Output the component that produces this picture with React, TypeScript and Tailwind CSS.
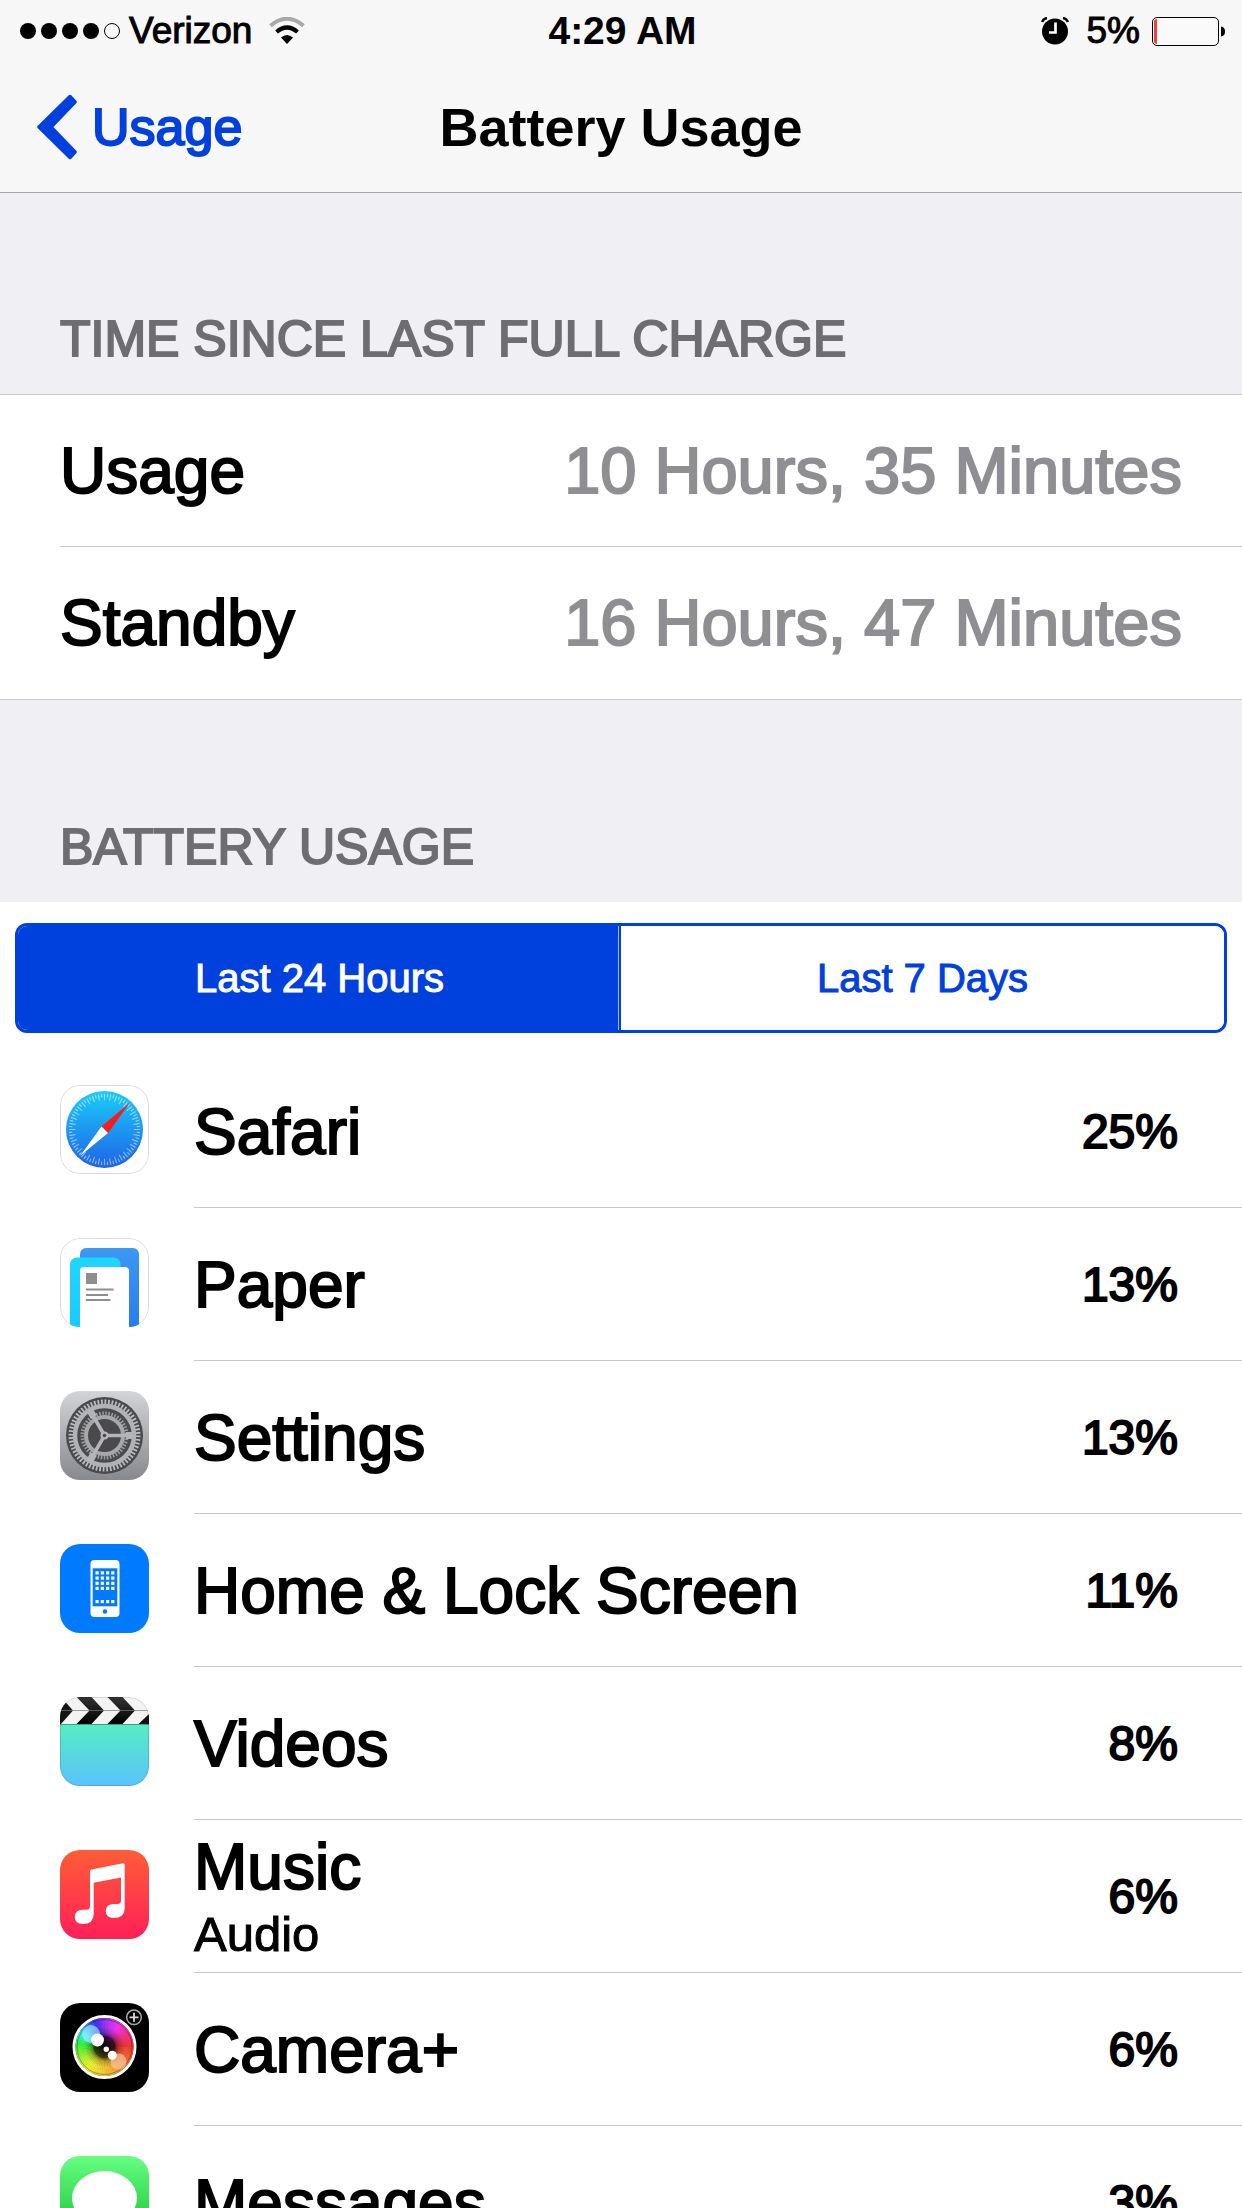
import { useState, type ReactNode } from 'react';

interface AppUsage {
  name: string;
  detail?: string;
  percent: number;
  icon: ReactNode;
}

function IconFrame({ id, children }: { id: string; children: ReactNode }) {
  return (
    <svg width="89" height="89" viewBox="0 0 89 89" aria-hidden="true">
      <clipPath id={`${id}-clip`}>
        <rect width="89" height="89" rx="20" />
      </clipPath>
      <g clipPath={`url(#${id}-clip)`}>{children}</g>
    </svg>
  );
}

function Gradient({ id, from, to }: { id: string; from: string; to: string }) {
  return (
    <linearGradient id={id} x1="0" y1="0" x2="0" y2="1">
      <stop offset="0" stopColor={from} />
      <stop offset="1" stopColor={to} />
    </linearGradient>
  );
}

function SafariIcon() {
  return (
    <IconFrame id="safari">
      <Gradient id="safari-bg" from="#1bcdf8" to="#1f62e8" />
      <rect width="89" height="89" fill="#fff" />
      <rect x="0.5" y="0.5" width="88" height="88" rx="19.5" fill="none" stroke="#d9d9dc" />
      <circle cx="44.5" cy="44.5" r="38.5" fill="url(#safari-bg)" />
      <circle cx="44.5" cy="44.5" r="32.5" fill="none" stroke="#fff" strokeOpacity="0.5" strokeWidth="6.5" pathLength="360" strokeDasharray="2 8" strokeDashoffset="1" />
      <circle cx="44.5" cy="44.5" r="34" fill="none" stroke="#fff" strokeOpacity="0.5" strokeWidth="3.5" pathLength="360" strokeDasharray="2 8" strokeDashoffset="6" />
      <path d="M70 17.5L41.5 41.5L48 48Z" fill="#fb1a17" />
      <path d="M20 71L41.5 41.5L48 48Z" fill="#fff" />
    </IconFrame>
  );
}

function PaperIcon() {
  return (
    <IconFrame id="paper">
      <Gradient id="paper-back" from="#3c98f1" to="#2579ec" />
      <Gradient id="paper-mid" from="#1fd6ff" to="#16c6ff" />
      <rect width="89" height="89" fill="#fff" />
      <rect x="0.5" y="0.5" width="88" height="88" rx="19.5" fill="none" stroke="#d9d9dc" />
      <rect x="20" y="10" width="59" height="90" rx="6" fill="url(#paper-back)" />
      <rect x="10" y="19.5" width="50.5" height="90" rx="7" fill="url(#paper-mid)" />
      <rect x="20" y="29" width="49" height="80" rx="4" fill="#fff" />
      <rect x="26" y="35" width="11" height="11" fill="#8e8e8e" />
      <path d="M26 51.5H53.5M26 57H48M26 62H50.5" stroke="#8e8e8e" strokeWidth="2" />
    </IconFrame>
  );
}

function SettingsIcon() {
  return (
    <IconFrame id="settings">
      <Gradient id="settings-bg" from="#d3d4d8" to="#88898e" />
      <rect width="89" height="89" fill="url(#settings-bg)" />
      <circle cx="44.5" cy="44.5" r="38.5" fill="#4a4a4c" />
      <circle cx="44.5" cy="44.5" r="33.5" fill="none" stroke="#bdbec2" strokeWidth="5" pathLength="360" strokeDasharray="3 3" />
      <circle cx="44.5" cy="44.5" r="29.5" fill="none" stroke="#b1b2b6" strokeWidth="4.5" />
      <circle cx="44.5" cy="44.5" r="22" fill="none" stroke="#9c9da0" strokeWidth="4" pathLength="360" strokeDasharray="4 4" />
      <circle cx="44.5" cy="44.5" r="18.5" fill="none" stroke="#a6a7ab" strokeWidth="4" />
      <path d="M44.5 44.5H74M44.5 44.5L29.75 19M44.5 44.5L29.75 70" stroke="#b4b5b9" strokeWidth="3.5" />
      <path d="M66 44.5H74M33.75 26L29.75 19M33.75 63L29.75 70" stroke="#b4b5b9" strokeWidth="7" />
      <circle cx="44.5" cy="44.5" r="4" fill="#b4b5b9" />
      <circle cx="44.5" cy="44.5" r="1.8" fill="#4a4a4c" />
    </IconFrame>
  );
}

function HomeIcon() {
  const cols = [35.5, 40.7, 46, 51.2];
  const rows = [27.3, 32.5, 37.7, 42.8, 56];
  return (
    <IconFrame id="home">
      <rect width="89" height="89" fill="#007aff" />
      <rect x="30.5" y="16" width="29" height="57" rx="4" fill="#fff" />
      <rect x="32.7" y="24.3" width="24.6" height="38" fill="#007aff" />
      {rows.map(y => cols.map(x => (
        <rect key={`${x}-${y}`} x={x} y={y} width="3.2" height="3.2" fill="#fff" />
      )))}
      <circle cx="45" cy="67.5" r="2.2" fill="#007aff" />
    </IconFrame>
  );
}

function VideosIcon() {
  return (
    <IconFrame id="videos">
      <Gradient id="videos-bg" from="#55eec2" to="#5ac2fd" />
      <Gradient id="videos-stripe" from="#333" to="#000" />
      <rect width="89" height="28" fill="#f3f3f3" />
      <rect y="27" width="89" height="62" fill="url(#videos-bg)" />
      <path d="M0 0H1L13 13.5L1 27H0Z" fill="#151515" />
      <path d="M16.5 0H31.5L44 13.5L31.5 27H16.5L29.5 13.5Z" fill="url(#videos-stripe)" />
      <path d="M47.5 0H62.5L75 13.5L62.5 27H47.5L60.5 13.5Z" fill="url(#videos-stripe)" />
      <path d="M78.5 27L89 17V27Z" fill="#111" />
      <path d="M0 13.5H89" stroke="#777" strokeOpacity="0.7" />
      <path d="M0 27.5H89" stroke="#3f9f86" />
      <rect x="0.5" y="0.5" width="88" height="88" rx="19.5" fill="none" stroke="#000" strokeOpacity="0.12" />
    </IconFrame>
  );
}

function MusicIcon() {
  return (
    <IconFrame id="music">
      <Gradient id="music-bg" from="#ff5d37" to="#ff1f58" />
      <rect width="89" height="89" fill="url(#music-bg)" />
      <path
        d="M31.5 19.5L63 13.2Q64.7 13 64.7 14.7V58Q64.7 68 53.5 68Q45.7 67.5 45.7 61Q46 54 54 54H57.5Q61 54 61 50.5V27.5L33.7 32.8V64Q33.5 74 23 74Q14.7 73.5 14.7 67Q15 59.7 23 59.7H26.5Q30 59.7 30 56V21.5Q30 19.8 31.5 19.5Z"
        fill="#fff"
      />
    </IconFrame>
  );
}

// hue at each 30 degree step round the lens, clockwise from the top
const LENS_HUES = [275, 300, 335, 365, 378, 395, 408, 418, 440, 475, 545, 590, 635];

function CameraIcon() {
  const wedges = Array.from({ length: 72 }, (_, i) => {
    const step = Math.floor(i / 6);
    const hue = LENS_HUES[step] + ((LENS_HUES[step + 1] - LENS_HUES[step]) * (i % 6)) / 6;
    const a = (i * 5 * Math.PI) / 180;
    const b = ((i * 5 + 6) * Math.PI) / 180;
    return {
      hue: hue % 360,
      d: `M44.5 44L${44.5 + 29 * Math.sin(a)} ${44 - 29 * Math.cos(a)}L${44.5 + 29 * Math.sin(b)} ${44 - 29 * Math.cos(b)}Z`,
    };
  });
  return (
    <IconFrame id="camera">
      <radialGradient id="camera-iris">
        <stop offset="0" stopColor="#000" stopOpacity="0.9" />
        <stop offset="0.35" stopColor="#000" stopOpacity="0.6" />
        <stop offset="0.5" stopColor="#000" stopOpacity="0.2" />
        <stop offset="0.7" stopColor="#000" stopOpacity="0" />
      </radialGradient>
      <rect width="89" height="89" fill="#000" />
      <circle cx="44.5" cy="44" r="30.5" fill="#333" stroke="#fff" strokeWidth="3" />
      {wedges.map(w => <path key={w.d} d={w.d} fill={`hsl(${w.hue} 85% 57%)`} />)}
      <circle cx="44.5" cy="44" r="27.5" fill="none" stroke="#000" strokeOpacity="0.3" />
      <circle cx="44.5" cy="44" r="29" fill="url(#camera-iris)" />
      <circle cx="44.5" cy="44" r="11" fill="#000" fillOpacity="0.3" />
      <circle cx="31" cy="31" r="9" fill="#aef4ff" fillOpacity="0.6" />
      <circle cx="58.5" cy="58.5" r="8" fill="#ffd0b0" fillOpacity="0.6" />
      <circle cx="37.5" cy="37" r="6.5" fill="#fff" />
      <circle cx="46.3" cy="46.3" r="2.7" fill="#fff" />
      <circle cx="52.3" cy="52.3" r="4.5" fill="#fff" />
      <circle cx="74" cy="14.3" r="7.3" fill="none" stroke="#aaa" strokeWidth="1.5" />
      <path d="M74 9.8V18.8M69.5 14.3H78.5" stroke="#ddd" strokeWidth="1.8" />
    </IconFrame>
  );
}

function MessagesIcon() {
  return (
    <IconFrame id="messages">
      <Gradient id="messages-bg" from="#66ff82" to="#10b92c" />
      <rect width="89" height="89" fill="url(#messages-bg)" />
      <ellipse cx="44.5" cy="42" rx="32.5" ry="27" fill="#fff" />
      <path d="M28 62Q27 70 20 73Q31 74 38 66Z" fill="#fff" />
    </IconFrame>
  );
}

const totals = [
  { label: 'Usage', value: '10 Hours, 35 Minutes' },
  { label: 'Standby', value: '16 Hours, 47 Minutes' },
];

const apps: AppUsage[] = [
  { name: 'Safari', percent: 25, icon: <SafariIcon /> },
  { name: 'Paper', percent: 13, icon: <PaperIcon /> },
  { name: 'Settings', percent: 13, icon: <SettingsIcon /> },
  { name: 'Home & Lock Screen', percent: 11, icon: <HomeIcon /> },
  { name: 'Videos', percent: 8, icon: <VideosIcon /> },
  { name: 'Music', detail: 'Audio', percent: 6, icon: <MusicIcon /> },
  { name: 'Camera+', percent: 6, icon: <CameraIcon /> },
  { name: 'Messages', percent: 3, icon: <MessagesIcon /> },
];

const ranges = ['Last 24 Hours', 'Last 7 Days'];

function StatusBar() {
  return (
    <div className="grid h-[62px] grid-cols-3 items-center pl-5 pr-[17px] text-[37px] leading-[40px]">
      <div className="flex items-center gap-[9px] [-webkit-text-stroke:1px]">
        <div className="flex gap-[5px]">
          <span className="size-4 rounded-full bg-black" />
          <span className="size-4 rounded-full bg-black" />
          <span className="size-4 rounded-full bg-black" />
          <span className="size-4 rounded-full bg-black" />
          <span className="size-4 rounded-full border border-black" />
        </div>
        <span>Verizon</span>
        <svg className="ml-2" width="36" height="28" viewBox="0 0 36 28" fill="none" aria-hidden="true">
          <path d="M1.5 8.7Q18 -5.2 34.5 8.7" stroke="#a9a9a9" strokeWidth="4" />
          <path d="M7.5 15Q18 6 28.5 15" stroke="#000" strokeWidth="4.2" />
          <path d="M12 20.5Q18 15.5 24 20.5L18 27Z" fill="#000" />
        </svg>
      </div>
      <div className="text-center text-[39px] font-bold">4:29 AM</div>
      <div className="flex items-center justify-end [-webkit-text-stroke:1px]">
        <svg className="mr-[18px]" width="28" height="28" viewBox="0 0 28 28" fill="none" aria-hidden="true">
          <circle cx="14" cy="14.5" r="13" fill="#000" />
          <path d="M1 5Q2.5 1.5 6 1M27 5Q25.5 1.5 22 1" stroke="#000" strokeWidth="2.5" />
          <path d="M14.5 5.5V15.5H8" stroke="#fff" strokeWidth="2.7" />
        </svg>
        <span>5%</span>
        <svg className="ml-3" width="73" height="29" viewBox="0 0 73 29" fill="none" aria-hidden="true">
          <rect x="0.5" y="0.5" width="66" height="28" rx="4.5" fill="#fff" fillOpacity="0.4" stroke="#000" />
          <path d="M2 5Q2 2 5 2V27Q2 27 2 24Z" fill="#f0403a" />
          <path d="M69 9.5Q73 10 73 14.5Q73 19 69 19.5Z" fill="#000" />
        </svg>
      </div>
    </div>
  );
}

function NavBar() {
  return (
    <nav className="grid h-[130px] grid-cols-[1fr_auto_1fr] items-center text-[52px] leading-[60px]">
      <a href="#usage" className="flex items-center gap-[15px] pl-[37px] text-[#0040dd] [-webkit-text-stroke:2px]">
        <svg width="40" height="66" viewBox="0 0 40 66" aria-hidden="true">
          <path d="M2 33L33 2.5L38 8L14 33L38 58L33 63.5Z" fill="#0040dd" stroke="#0040dd" strokeWidth="3.5" strokeLinejoin="round" />
        </svg>
        Usage
      </a>
      <h1 className="text-[54px] font-bold">Battery Usage</h1>
    </nav>
  );
}

export default function App() {
  const [range, setRange] = useState(ranges[0]);

  return (
    <div className="h-screen overflow-hidden bg-white font-['Liberation_Sans',Arial,sans-serif] text-black">
      <header className="border-b border-[#a7a7ab] bg-[#f7f7f7]">
        <StatusBar />
        <NavBar />
      </header>

      {/* Totals */}
      <section>
        <h2 className="border-b border-[#c8c7cc] bg-[#efeff4] px-[60px] pt-[116px] pb-[25px] text-[50px] leading-[60px] text-[#6d6d72] [-webkit-text-stroke:2px]">
          TIME SINCE LAST FULL CHARGE
        </h2>
        <dl className="border-b border-[#c8c7cc] pl-[60px] leading-[72px] [-webkit-text-stroke:2px]">
          {totals.map(({ label, value }) => (
            <div key={label} className="flex h-[152px] items-center justify-between border-b border-[#c8c7cc] pr-[60px] last:border-b-0">
              <dt className="text-[64px]">{label}</dt>
              <dd className="text-[65px] text-[#8e8e93]">{value}</dd>
            </div>
          ))}
        </dl>
      </section>

      {/* Per app */}
      <section>
        <h2 className="bg-[#efeff4] px-[60px] pt-[117px] pb-[25px] text-[50px] leading-[60px] text-[#6d6d72] [-webkit-text-stroke:2px]">
          BATTERY USAGE
        </h2>
        <div className="px-[15px] pt-[21px] pb-[22px]">
          <div className="grid h-[110px] grid-cols-2 overflow-hidden rounded-[12px] border-3 border-[#0040dd]">
            {ranges.map(r => (
              <button
                key={r}
                type="button"
                aria-pressed={range === r}
                onClick={() => setRange(r)}
                className={`text-[40px] leading-[48px] [-webkit-text-stroke:1px] first:shadow-[inset_-2px_0_#0040dd,inset_-3px_0_#9db8f3] ${range === r ? 'bg-[#0040dd] text-white' : 'bg-white text-[#0040dd]'}`}
              >
                {r}
              </button>
            ))}
          </div>
        </div>
        <ul>
          {apps.map(app => (
            <li key={app.name} className="flex pl-[60px]">
              <div className="w-[134px] shrink-0 pt-[30px]">{app.icon}</div>
              <div className="flex h-[153px] flex-1 items-center justify-between border-b border-[#c8c7cc] pt-[2px] pr-[64px] [-webkit-text-stroke:2px]">
                <div>
                  <div className="text-[64px] leading-[74px]">{app.name}</div>
                  {app.detail && <div className="text-[49px] leading-[60px] [-webkit-text-stroke:1px]">{app.detail}</div>}
                </div>
                <div className="text-[48px] leading-[60px]">{app.percent}%</div>
              </div>
            </li>
          ))}
        </ul>
      </section>
    </div>
  );
}
